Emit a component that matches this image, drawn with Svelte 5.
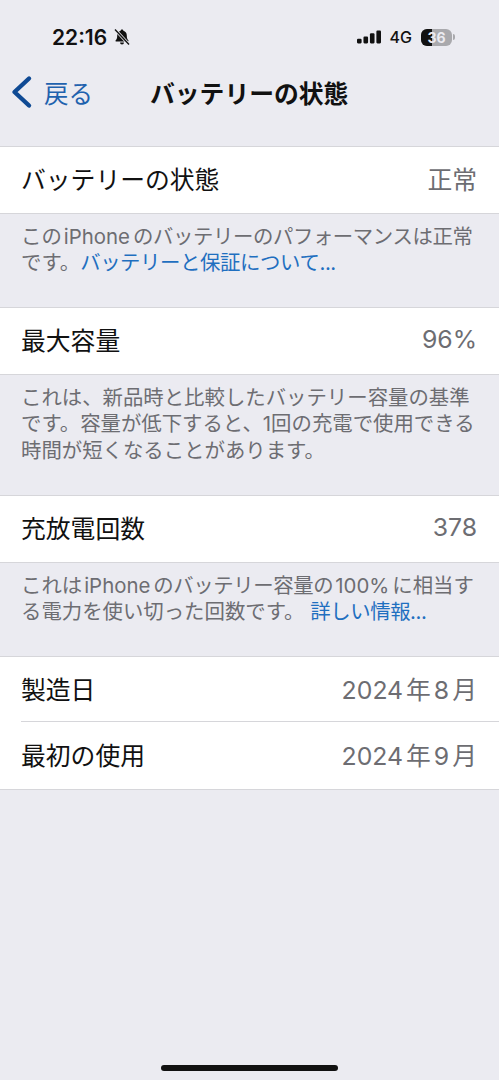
<script>
  const groups = [
    {
      rows: [{ label: "バッテリーの状態", value: "正常" }],
      lines: [
        [{ t: "この" }, { t: "iPhone", latin: true }, { t: "のバッテリーのパフォーマンスは正常", tight: true }],
        [{ t: "です。" }, { t: "バッテリーと保証について...", link: true, tight: true }]
      ],
      footerHeight: 93
    },
    {
      rows: [{ label: "最大容量", value: "96%" }],
      lines: [
        [{ t: "これは、新品時と比較したバッテリー容量の基準" }],
        [{ t: "です。容量が低下すると、1回の充電で使用できる" }],
        [{ t: "時間が短くなることがあります。" }]
      ],
      footerHeight: 120
    },
    {
      rows: [{ label: "充放電回数", value: "378" }],
      lines: [
        [{ t: "これは" }, { t: "iPhone", latin: true }, { t: "のバッテリー容量の", tight: true }, { t: "100%", latin: true }, { t: "に相当す" }],
        [{ t: "る電力を使い切った回数です。 " }, { t: "詳しい情報...", link: true, tight: true }]
      ],
      footerHeight: 93
    },
    {
      rows: [
        { label: "製造日", value: "2024 年 8 月" },
        { label: "最初の使用", value: "2024 年 9 月" }
      ]
    }
  ];
</script>

<div class="screen">
  <div class="status">
    <div class="status-left">
      <span class="time">22:16</span>
      <svg class="bell" viewBox="0 0 18 18" width="18" height="18">
        <path d="M9 1.5c-.8 0-1.3.5-1.4 1.2C5.4 3.3 4.2 5 4.2 7.4c0 2.6-.5 3.7-1.5 4.8-.5.6-.2 1.3.6 1.3h11.4c.8 0 1.1-.7.6-1.3-1-1.1-1.5-2.2-1.5-4.8 0-2.4-1.2-4.1-3.4-4.7-.1-.7-.6-1.2-1.4-1.2z" fill="#111" />
        <path d="M7 14.6h4a2 2 0 0 1-4 0z" fill="#111" />
        <path d="M2 1.5 16 16.5" stroke="#ebebf1" stroke-width="3" />
        <path d="M2 1.5 16 16.5" stroke="#111" stroke-width="1.4" />
      </svg>
    </div>
    <div class="status-right">
      <svg viewBox="0 0 26 16" width="24" height="16">
        <rect x="0" y="10" width="5" height="5" rx="1.2" fill="#111" />
        <rect x="7" y="7.5" width="5" height="7.5" rx="1.2" fill="#111" />
        <rect x="14" y="4" width="5" height="11" rx="1.2" fill="#111" />
        <rect x="21" y="1" width="5" height="14" rx="1.2" fill="#111" />
      </svg>
      <span class="net">4G</span>
      <div class="battery">
        <div class="battery-fill"></div>
        <span>36</span>
      </div>
      <div class="battery-tip"></div>
    </div>
  </div>

  <div class="nav">
    <svg class="chevron" viewBox="0 0 22 34" width="22" height="34">
      <path d="M18 3.5 3.5 17 18 30.5" fill="none" stroke="#0f4a94" stroke-width="4.4" stroke-linecap="round" stroke-linejoin="round" />
    </svg>
    <span class="back">戻る</span>
    <span class="title">バッテリーの状態</span>
  </div>

  {#each groups as group}
    <div class="group" class:multi={group.rows.length > 1}>
      {#each group.rows as row}
        <div class="row">
          <span class="label">{row.label}</span>
          <span class="value">{row.value}</span>
        </div>
      {/each}
    </div>
    {#if group.lines}
      <div class="footer" style="height: {group.footerHeight}px">
        {#each group.lines as line}
          <div class="line">
            {#each line as part}
              <span class:link={part.link} class:latin={part.latin} class:tight={part.tight}>{part.t}</span>
            {/each}
          </div>
        {/each}
      </div>
    {/if}
  {/each}

  <div class="home"></div>
</div>

<style>
  :global(body) {
    margin: 0;
    background: #ebebf1;
  }
  .screen {
    position: relative;
    width: 499px;
    height: 1080px;
    overflow: hidden;
    background: #ebebf1;
    font-family: "Inter", "Noto Sans CJK JP", sans-serif;
    color: #111;
  }
  .status {
    display: flex;
    justify-content: space-between;
    align-items: center;
    height: 30px;
    padding: 22px 44px 0 52px;
  }
  .status-left {
    display: flex;
    align-items: center;
    gap: 6px;
  }
  .time {
    font-size: 21px;
    font-weight: 600;
  }
  .status-right {
    display: flex;
    align-items: center;
  }
  .net {
    font-size: 16px;
    font-weight: 500;
    margin: 0 9px;
  }
  .battery {
    position: relative;
    width: 31px;
    height: 17px;
    border-radius: 6px;
    overflow: hidden;
    background: #a9a9ad;
    color: #ebebf1;
    font-size: 14px;
    font-weight: 700;
    display: flex;
    align-items: center;
    justify-content: center;
  }
  .battery-fill {
    position: absolute;
    inset: 0 auto 0 0;
    width: 11px;
    background: #111;
  }
  .battery span {
    position: relative;
  }
  .battery-tip {
    width: 2px;
    height: 6px;
    margin-left: 1px;
    border-radius: 0 2px 2px 0;
    background: #a9a9ad;
  }
  .nav {
    position: relative;
    display: flex;
    align-items: center;
    height: 42px;
    margin: 19px 0 33px;
    padding-left: 11px;
  }
  .back {
    margin-left: 11px;
    font-size: 24.5px;
    color: #1f62ae;
  }
  .title {
    position: absolute;
    left: 150px;
    font-size: 24.8px;
    font-weight: 700;
    white-space: nowrap;
  }
  .group {
    background: #fff;
    border-top: 1px solid #d6d6da;
    border-bottom: 1px solid #d6d6da;
  }
  .row {
    box-sizing: border-box;
    display: flex;
    justify-content: space-between;
    align-items: center;
    height: 66px;
    padding: 0 22px 4px 21px;
    font-size: 24.8px;
  }
  .multi .row {
    height: 64px;
    padding-bottom: 3px;
  }
  .multi .row + .row {
    height: 68px;
    border-top: 1px solid #d6d6da;
    margin-left: 21px;
    padding-left: 0;
    padding-bottom: 4px;
  }
  .value {
    color: #6d6d72;
    word-spacing: -4px;
  }
  .footer {
    box-sizing: border-box;
    padding: 9.5px 10px 0 21px;
    color: #6d6d72;
    font-size: 20.4px;
    line-height: 26.5px;
  }
  .line {
    white-space: pre;
  }
  .latin {
    margin: 0 3px 0 2px;
  }
  .tight {
    letter-spacing: -0.4px;
  }
  .link {
    color: #1f6fc0;
  }
  .home {
    position: absolute;
    left: 161px;
    bottom: 9px;
    width: 177px;
    height: 6px;
    border-radius: 3px;
    background: #111;
  }
</style>
